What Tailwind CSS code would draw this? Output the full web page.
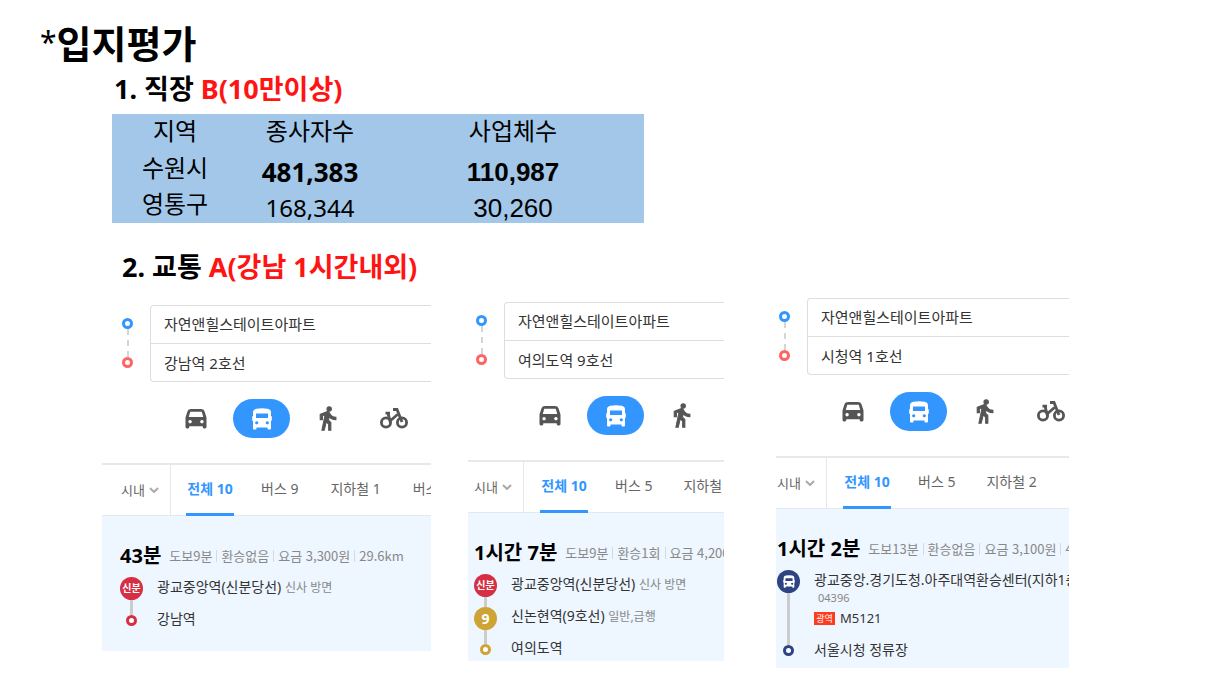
<!DOCTYPE html>
<html lang="ko">
<head>
<meta charset="utf-8">
<meta name="viewport" content="width=device-width, initial-scale=1">
<title>입지평가</title>
<script src="https://cdn.jsdelivr.net/npm/@tailwindcss/browser@4"></script>
</head>
<body class="bg-white text-black font-['Noto_Sans','Noto_Sans_CJK_KR',sans-serif]">
<svg class="hidden" aria-hidden="true">
  <symbol id="car" viewBox="0 0 24 22"><path fill="currentColor" fill-rule="evenodd" d="M7 1h10q3.200 0 3.900 2.500L23 10v10q0 1.500-1.500 1.500h-1Q19 21.500 19 20v-1H5v1q0 1.500-1.500 1.500h-1Q1 21.500 1 20V10L3.100 3.500Q3.800 1 7 1zM6 3.800L4.400 9.500h15.200L18 3.800zM5.800 12.500a1.800 1.800 0 1 0 .01 0zM18.200 12.500a1.800 1.800 0 1 0 .01 0z"/></symbol>
  <symbol id="bus" viewBox="0 0 20 22"><path fill="currentColor" fill-rule="evenodd" d="M4.500 .8Q10-.3 15.500 .8 19 1.500 19 4.500V8q.8 0 .8 1v3q0 .8-.8 1v7.500q0 1-1 1h-1.500q-1 0-1-1V19.500h-11v1q0 1-1 1H2q-1 0-1-1V13q-.8-.2-.8-1V9q0-1 .8-1V4.500Q1 1.500 4.500 .8zM4 5.500v4.500h12V5.500zM4.700 13.200a1.600 1.600 0 1 0 .01 0zM15.300 13.200a1.600 1.600 0 1 0 .01 0z"/></symbol>
  <symbol id="walk" viewBox="0 0 24 24"><path fill="currentColor" stroke="currentColor" stroke-width=".9" d="M13.500 5.500c1.100 0 2-.9 2-2s-.9-2-2-2-2 .9-2 2 .9 2 2 2zM9.800 8.900L7 22.500h2.100l1.800-7.500 2.100 2v5.500h2v-7l-2.100-2 .6-3C14.800 12 16.800 13 19.500 13v-2c-1.900 0-4-1-4.800-2.400l-1-1.600c-.4-.6-1-1-1.700-1-.3 0-.5.1-.8.1L5.500 8.300V13h2V9.600l2.300-.7"/></symbol>
  <symbol id="bike" viewBox="0 0 28 21"><g fill="none" stroke="currentColor" stroke-width="2.800"><circle cx="6" cy="14.500" r="4.600"/><circle cx="22" cy="14.500" r="4.600"/><path d="M5.500 5.200h4.500M8 5.200l2 7.800 7.500-6.500M13 1.500h4l5 12.500"/></g></symbol>
  <symbol id="chev" viewBox="0 0 10 6"><path fill="none" stroke="#aaa" stroke-width="2" d="M1 1l4 4 4-4"/></symbol>
</svg>
<main>
  <h1 class="pt-[23px] pl-10 text-[38px] leading-10 font-bold"><span class="align-[5px] text-3xl leading-none font-normal">*</span>입지평가</h1>

  <section>
    <h2 class="mt-[10px] ml-[114px] text-[27px] leading-8 font-bold">1. 직장 <span class="text-[#ff1414]">B(10만이상)</span></h2>
    <table class="mt-[9px] ml-[112px] w-[532px] table-fixed bg-[#a2c7e8] text-center text-2xl">
      <thead><tr class="h-[37px]"><th scope="col" class="w-[126px] p-0 pb-1 font-normal leading-8">지역</th><th scope="col" class="w-36 p-0 pb-1 font-normal leading-8">종사자수</th><th scope="col" class="p-0 pb-1 font-normal leading-8">사업체수</th></tr></thead>
      <tbody>
        <tr class="h-[37px]"><th scope="row" class="p-0 pb-1 font-normal leading-8">수원시</th><td class="p-0 pt-1 text-[26px] leading-8 font-bold">481,383</td><td class="p-0 pt-1 font-['Liberation_Sans',sans-serif] text-[26px] leading-8 font-bold">110,987</td></tr>
        <tr class="h-[35px]"><th scope="row" class="p-0 pb-1 font-normal leading-7">영통구</th><td class="p-0 pt-1 leading-7">168,344</td><td class="p-0 pt-1 font-['Liberation_Sans',sans-serif] text-[26px] leading-7">30,260</td></tr>
      </tbody>
    </table>
  </section>

  <section>
    <h2 class="mt-7 ml-[122px] text-[27px] leading-8 font-bold">2. 교통 <span class="text-[#ff1414]">A(강남 1시간내외)</span></h2>
    <div class="grid grid-cols-[329fr_256fr_308fr] items-start gap-x-[37px] pt-[15px] pr-[147px] pl-[102px] text-sm text-[#333]">

      <article class="mt-[7px] min-w-0 overflow-hidden">
        <div class="flex pl-5">
          <div class="flex w-[11px] shrink-0 flex-col items-center pt-[13px]"><i class="size-[11px] rounded-full border-[3px] border-[#3396ff]"></i><i class="h-7 border-l-2 border-dashed border-[#d5d5d5]"></i><i class="size-[11px] rounded-full border-[3px] border-[#ff6464]"></i></div>
          <div class="ml-[17px] min-w-0 flex-1 rounded-l border border-r-0 border-[#dedede] text-[15px]">
            <input aria-label="출발지" value="자연앤힐스테이트아파트" class="block h-[37px] w-full pb-[2px] pl-[13px] outline-none">
            <input aria-label="도착지" value="강남역 2호선" class="block h-[38px] w-full border-t border-[#dedede] pl-[13px] outline-none">
          </div>
        </div>
        <div class="mt-[17px] flex gap-[9px] pl-[65px] text-[#555]">
          <button aria-label="자동차" class="flex h-[39px] w-[57px] shrink-0 items-center justify-center"><svg class="h-[21px] w-6"><use href="#car"/></svg></button>
          <button aria-label="대중교통" class="flex h-[39px] w-[57px] shrink-0 items-center justify-center rounded-full bg-[#3396ff] text-white"><svg class="h-[22px] w-5"><use href="#bus"/></svg></button>
          <button aria-label="도보" class="flex h-[39px] w-[57px] shrink-0 items-center justify-center"><svg class="size-[27px]"><use href="#walk"/></svg></button>
          <button aria-label="자전거" class="flex h-[39px] w-[57px] shrink-0 items-center justify-center"><svg class="h-[21px] w-7"><use href="#bike"/></svg></button>
        </div>
        <div class="mt-[25px] flex h-[53px] border-t-2 border-b border-t-[#e8e8e8] border-b-[#e4e9ee] pl-[19px] whitespace-nowrap text-[#666]">
          <div class="relative flex w-[50px] shrink-0 items-center border-r border-[#e8e8e8]"><select aria-label="지역 구분" class="w-full appearance-none text-[13px] outline-none"><option>시내</option></select><svg class="pointer-events-none absolute right-[11px] h-[6px] w-[10px]"><use href="#chev"/></svg></div>
          <div class="ml-[15px] flex gap-[27px]"><button class="-mb-px w-12 border-b-[3px] border-[#3396ff] font-bold text-[#3396ff]">전체 10</button><button class="pb-[2px]">버스 9</button><button class="ml-[5px] pb-[2px]">지하철 1</button><button class="ml-[5px] pb-[2px]">버스</button></div>
        </div>
        <div class="h-[135px] bg-[#eef6ff] pt-[26px] pl-[18px] whitespace-nowrap">
          <p class="flex items-center font-['Noto_Sans_CJK_KR',sans-serif] text-[13px] leading-7 text-[#888]"><strong class="mr-2 font-['Noto_Sans','Noto_Sans_CJK_KR',sans-serif] text-xl leading-7 text-black">43분</strong>도보9분<i class="mx-1 h-3 w-px shrink-0 bg-[#d5dae0]"></i>환승없음<i class="mx-1 h-3 w-px shrink-0 bg-[#d5dae0]"></i>요금 3,300원<i class="mx-1 h-3 w-px shrink-0 bg-[#d5dae0]"></i>29.6km</p>
          <ol class="mt-[7px]">
            <li class="flex h-[38px]"><span class="flex w-[23px] shrink-0 flex-col items-center"><b class="h-[23px] w-[23px] rounded-full bg-[#d62f43] text-center text-[10px] leading-[22px] text-white">신분</b><i class="w-[3px] flex-1 bg-[#ccc]"></i></span><span class="ml-[14px] leading-5">광교중앙역(신분당선) <small class="text-xs text-[#888]">신사 방면</small></span></li>
            <li class="flex h-[11px]"><span class="flex w-[23px] shrink-0 justify-center"><i class="size-[11px] rounded-full border-[3px] border-[#d62f43] bg-white"></i></span><span class="ml-[14px] leading-[8px]">강남역</span></li>
          </ol>
        </div>
      </article>

      <article class="mt-1 min-w-0 overflow-hidden">
        <div class="flex pl-2">
          <div class="flex w-[11px] shrink-0 flex-col items-center pt-[13px]"><i class="size-[11px] rounded-full border-[3px] border-[#3396ff]"></i><i class="h-7 border-l-2 border-dashed border-[#d5d5d5]"></i><i class="size-[11px] rounded-full border-[3px] border-[#ff6464]"></i></div>
          <div class="ml-[17px] min-w-0 flex-1 rounded-l border border-r-0 border-[#dedede] text-[15px]">
            <input aria-label="출발지" value="자연앤힐스테이트아파트" class="block h-[37px] w-full pb-[2px] pl-[13px] outline-none">
            <input aria-label="도착지" value="여의도역 9호선" class="block h-[38px] w-full border-t border-[#dedede] pl-[13px] outline-none">
          </div>
        </div>
        <div class="mt-[17px] flex gap-[9px] pl-[53px] text-[#555]">
          <button aria-label="자동차" class="flex h-[39px] w-[57px] shrink-0 items-center justify-center"><svg class="h-[21px] w-6"><use href="#car"/></svg></button>
          <button aria-label="대중교통" class="flex h-[39px] w-[57px] shrink-0 items-center justify-center rounded-full bg-[#3396ff] text-white"><svg class="h-[22px] w-5"><use href="#bus"/></svg></button>
          <button aria-label="도보" class="flex h-[39px] w-[57px] shrink-0 items-center justify-center"><svg class="size-[27px]"><use href="#walk"/></svg></button>
        </div>
        <div class="mt-[25px] flex h-[53px] border-t-2 border-b border-t-[#e8e8e8] border-b-[#e4e9ee] pl-[6px] whitespace-nowrap text-[#666]">
          <div class="relative flex w-[50px] shrink-0 items-center border-r border-[#e8e8e8]"><select aria-label="지역 구분" class="w-full appearance-none text-[13px] outline-none"><option>시내</option></select><svg class="pointer-events-none absolute right-[11px] h-[6px] w-[10px]"><use href="#chev"/></svg></div>
          <div class="ml-4 flex gap-[27px]"><button class="-mb-px w-12 border-b-[3px] border-[#3396ff] font-bold text-[#3396ff]">전체 10</button><button class="pb-[2px]">버스 5</button><button class="ml-1 pb-[2px]">지하철</button></div>
        </div>
        <div class="h-[148px] bg-[#eef6ff] pt-[26px] pl-[6px] whitespace-nowrap">
          <p class="flex items-center font-['Noto_Sans_CJK_KR',sans-serif] text-[13px] leading-7 text-[#888]"><strong class="mr-2 shrink-0 font-['Noto_Sans','Noto_Sans_CJK_KR',sans-serif] text-xl leading-7 text-black">1시간 7분</strong>도보9분<i class="mx-1 h-3 w-px shrink-0 bg-[#d5dae0]"></i>환승1회<i class="mx-1 h-3 w-px shrink-0 bg-[#d5dae0]"></i>요금 4,200</p>
          <ol class="mt-[7px]">
            <li class="flex h-[33px]"><span class="flex w-[23px] shrink-0 flex-col items-center"><b class="h-[23px] w-[23px] rounded-full bg-[#d62f43] text-center text-[10px] leading-[22px] text-white">신분</b><i class="w-[3px] flex-1 bg-[#ccc]"></i></span><span class="ml-[14px] leading-5">광교중앙역(신분당선) <small class="text-xs text-[#888]">신사 방면</small></span></li>
            <li class="flex h-[37px]"><span class="flex w-[23px] shrink-0 flex-col items-center"><b class="h-[23px] w-[23px] rounded-full bg-[#cfa436] text-center text-sm leading-[23px] text-white">9</b><i class="w-[3px] flex-1 bg-[#ccc]"></i></span><span class="ml-[14px] leading-[18px]">신논현역(9호선) <small class="text-xs text-[#888]">일반,급행</small></span></li>
            <li class="flex h-[11px]"><span class="flex w-[23px] shrink-0 justify-center"><i class="size-[11px] rounded-full border-[3px] border-[#cfa436] bg-white"></i></span><span class="ml-[14px] leading-[8px]">여의도역</span></li>
          </ol>
        </div>
      </article>

      <article class="ml-[15px] min-w-0 overflow-hidden">
        <div class="flex pl-[3px]">
          <div class="flex w-[11px] shrink-0 flex-col items-center pt-[13px]"><i class="size-[11px] rounded-full border-[3px] border-[#3396ff]"></i><i class="h-7 border-l-2 border-dashed border-[#d5d5d5]"></i><i class="size-[11px] rounded-full border-[3px] border-[#ff6464]"></i></div>
          <div class="ml-[17px] min-w-0 flex-1 rounded-l border border-r-0 border-[#dedede] text-[15px]">
            <input aria-label="출발지" value="자연앤힐스테이트아파트" class="block h-[37px] w-full pb-[2px] pl-[13px] outline-none">
            <input aria-label="도착지" value="시청역 1호선" class="block h-[38px] w-full border-t border-[#dedede] pl-[13px] outline-none">
          </div>
        </div>
        <div class="mt-[17px] flex gap-[9px] pl-12 text-[#555]">
          <button aria-label="자동차" class="flex h-[39px] w-[57px] shrink-0 items-center justify-center"><svg class="h-[21px] w-6"><use href="#car"/></svg></button>
          <button aria-label="대중교통" class="flex h-[39px] w-[57px] shrink-0 items-center justify-center rounded-full bg-[#3396ff] text-white"><svg class="h-[22px] w-5"><use href="#bus"/></svg></button>
          <button aria-label="도보" class="flex h-[39px] w-[57px] shrink-0 items-center justify-center"><svg class="size-[27px]"><use href="#walk"/></svg></button>
          <button aria-label="자전거" class="flex h-[39px] w-[57px] shrink-0 items-center justify-center"><svg class="h-[21px] w-7"><use href="#bike"/></svg></button>
        </div>
        <div class="mt-[25px] flex h-[53px] border-t-2 border-b border-t-[#e8e8e8] border-b-[#e4e9ee] pl-px whitespace-nowrap text-[#666]">
          <div class="relative flex w-[50px] shrink-0 items-center border-r border-[#e8e8e8]"><select aria-label="지역 구분" class="w-full appearance-none text-[13px] outline-none"><option>시내</option></select><svg class="pointer-events-none absolute right-[11px] h-[6px] w-[10px]"><use href="#chev"/></svg></div>
          <div class="ml-4 flex gap-[27px]"><button class="-mb-px w-12 border-b-[3px] border-[#3396ff] font-bold text-[#3396ff]">전체 10</button><button class="pb-[2px]">버스 5</button><button class="ml-1 pb-[2px]">지하철 2</button></div>
        </div>
        <div class="h-[159px] bg-[#eef6ff] pt-[26px] pl-px whitespace-nowrap">
          <p class="flex items-center font-['Noto_Sans_CJK_KR',sans-serif] text-[13px] leading-7 text-[#888]"><strong class="mr-2 shrink-0 font-['Noto_Sans','Noto_Sans_CJK_KR',sans-serif] text-xl leading-7 text-black">1시간 2분</strong>도보13분<i class="mx-1 h-3 w-px shrink-0 bg-[#d5dae0]"></i>환승없음<i class="mx-1 h-3 w-px shrink-0 bg-[#d5dae0]"></i>요금 3,100원<i class="mx-1 h-3 w-px shrink-0 bg-[#d5dae0]"></i>4</p>
          <ol class="mt-[7px]">
            <li class="flex h-[75px]"><span class="flex w-[23px] shrink-0 flex-col items-center"><b class="flex size-[23px] shrink-0 items-center justify-center rounded-full bg-[#2d4382] text-white"><svg class="h-[13px] w-3"><use href="#bus"/></svg></b><i class="w-[3px] flex-1 bg-[#ccc]"></i></span>
              <div class="ml-[14px]"><p class="leading-5">광교중앙.경기도청.아주대역환승센터(지하1층</p><p class="pl-1 text-[11px] leading-4 text-[#888]">04396</p><p class="mt-[2px] flex items-center text-[13px] leading-5"><b class="mr-[5px] h-[13px] w-[21px] bg-[#ff3b1f] text-center text-[9px] leading-[13px] font-normal text-white">광역</b>M5121</p></div></li>
            <li class="flex h-[11px]"><span class="flex w-[23px] shrink-0 justify-center"><i class="size-[11px] rounded-full border-[3px] border-[#2d4382] bg-white"></i></span><span class="ml-[14px] leading-[10px]">서울시청 정류장</span></li>
          </ol>
        </div>
      </article>
    </div>
  </section>
</main>
</body>
</html>
